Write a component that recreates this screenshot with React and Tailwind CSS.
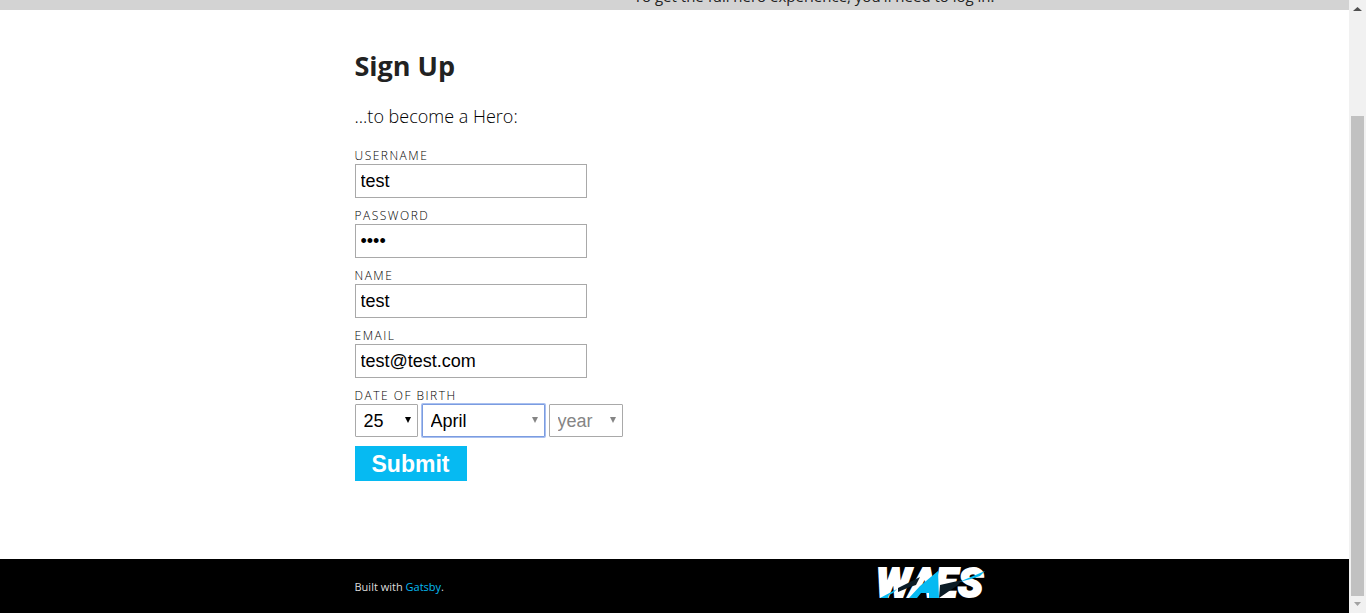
import { useState } from "react";

const fieldBox = "h-[34px] w-[232px] border border-[#a9a9a9] bg-white px-[5px] font-['Liberation_Sans',Arial,sans-serif] text-lg text-black outline-none";
const labelText = "text-xs leading-4 tracking-[1.5px] font-light uppercase text-black";

function Field({ id, label, type = "text", initial }) {
  const [value, setValue] = useState(initial);
  return (
    <div className="mb-2.5 flex flex-col items-start">
      <label htmlFor={id} className={labelText}>{label}</label>
      <input id={id} type={type} value={value} onChange={(e) => setValue(e.target.value)} className={fieldBox} />
    </div>
  );
}

function DateSelect({ label, initial, options, box, arrow = "text-[#858585]" }) {
  const [value, setValue] = useState(initial);
  return (
    <div className={"relative rounded-[1px] border bg-white " + box}>
      <select
        aria-label={label}
        value={value}
        onChange={(e) => setValue(e.target.value)}
        className="h-full w-full appearance-none bg-transparent px-2 font-['Liberation_Sans',Arial,sans-serif] text-lg outline-none"
      >
        {options.map((o) => <option key={o}>{o}</option>)}
      </select>
      <svg viewBox="0 0 6 6" className={"pointer-events-none absolute top-3 right-1.5 size-1.5 " + arrow} aria-hidden="true">
        <path d="M0 0H6L3 6Z" fill="currentColor" />
      </svg>
    </div>
  );
}

function Logo() {
  return (
    <svg viewBox="0 0 112 36" className="h-9 w-28" role="img" aria-label="WAES">
      <g fontFamily="Roboto, sans-serif" fontWeight="900" fontStyle="italic" fontSize="41" fill="#fff" stroke="#fff" strokeWidth="2">
        <text x="1" y="31">W</text>
        <text x="35" y="31">A</text>
        <text x="60" y="31">E</text>
        <text x="83" y="31">S</text>
      </g>
      <path d="M5 32L22 23L18 27L14 29L13 32Z" fill="#06baf2" />
      <path d="M23 22L45 11L41 19L35 21L23 26Z" fill="#0b1c26" />
      <path d="M34 32L45 20L63 5L64 32H54V27H46L42 32Z" fill="#06baf2" />
      <path d="M65 19L87 14L83 19L64 32Z" fill="#0b1c26" />
      <path d="M84 16L110 5L105 10L96 13Z" fill="#06baf2" />
    </svg>
  );
}

export default function App() {
  return (
    <div className="flex h-screen overflow-hidden bg-white font-['Open_Sans','Noto_Sans',sans-serif] text-[#222]">
      <div className="flex min-w-0 flex-1 flex-col">
        <header className="flex h-2.5 shrink-0 items-end overflow-hidden bg-[#d3d3d3]">
          <p className="mx-auto w-full max-w-[640px] pb-1 text-right text-[15px] leading-5">To get the full hero experience, you'll need to log in.</p>
        </header>
        <main className="mx-auto w-full max-w-[640px] flex-1 pt-10">
          <h1 className="text-[27px] leading-8 font-bold">Sign Up</h1>
          <p className="mt-5 text-lg leading-7 font-light text-black">...to become a Hero:</p>
          <form className="mt-[18px]" onSubmit={(e) => e.preventDefault()}>
            <Field id="username" label="Username" initial="test" />
            <Field id="password" label="Password" type="password" initial="test" />
            <Field id="name" label="Name" initial="test" />
            <Field id="email" label="Email" initial="test@test.com" />
            <fieldset>
              <legend className={labelText}>Date of birth</legend>
              <div className="flex gap-1">
                <DateSelect label="Day" initial="25" options={["25", "26", "27"]} box="h-[33px] w-[63px] border-[#a9a9a9] text-black" arrow="text-black" />
                <DateSelect label="Month" initial="April" options={["March", "April", "May"]} box="h-[33px] w-[123px] border-[#7b9ce0] text-black ring-1 ring-[#a9c0f0]" />
                <DateSelect label="Year" initial="year" options={["year", "1990", "1991"]} box="h-[33px] w-[74px] border-[#a9a9a9] text-[#858585]" />
              </div>
            </fieldset>
            <button type="submit" className="mt-[9px] h-[35px] w-28 bg-[#06baf2] font-['Liberation_Sans',Arial,sans-serif] text-[23px] leading-8 font-bold text-white">Submit</button>
          </form>
        </main>
        <footer className="shrink-0 bg-black">
          <div className="mx-auto flex h-[54px] w-full max-w-[640px] items-center justify-between pr-2">
            <p className="pt-0.5 text-[11px] leading-4 text-[#ddd]">Built with <a href="https://www.gatsbyjs.org" className="text-[#06baf2]">Gatsby</a>.</p>
            <div className="pb-1"><Logo /></div>
          </div>
        </footer>
      </div>
      <div className="flex w-[17px] shrink-0 flex-col items-center bg-[#f1f1f1]" aria-hidden="true">
        <svg viewBox="0 0 17 17" className="size-[17px]"><path d="M4 11L8.500 7L13 11Z" fill="#505050" /></svg>
        <div className="mt-[99px] w-[13px] flex-1 bg-[#c1c1c1]" />
        <svg viewBox="0 0 17 17" className="size-[17px]"><path d="M5 6L8.500 10L12 6Z" fill="#a3a3a3" /></svg>
      </div>
    </div>
  );
}
